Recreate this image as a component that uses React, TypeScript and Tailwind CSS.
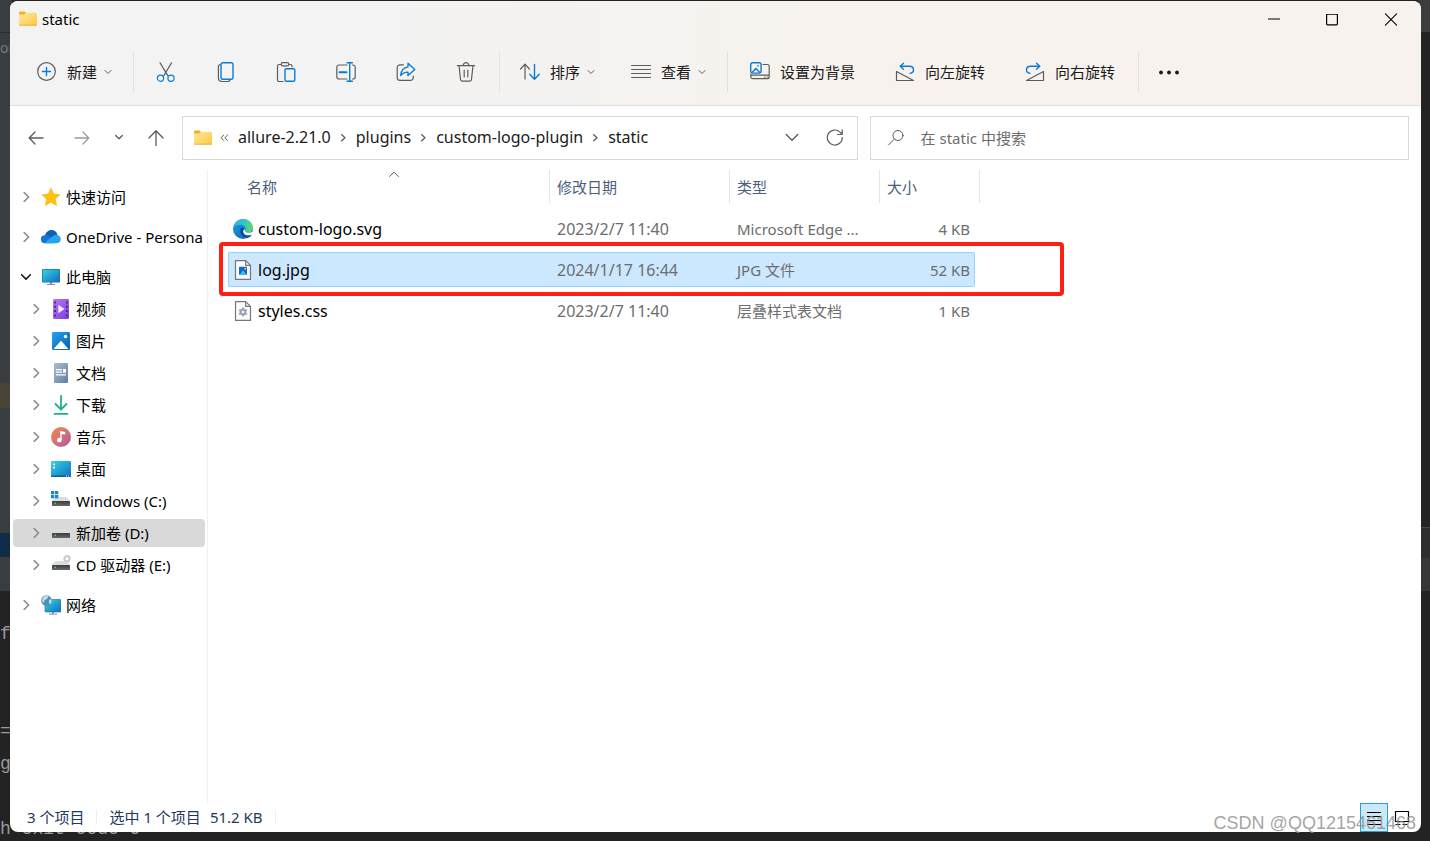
import React from 'react';

type IconProps = { children: React.ReactNode; className?: string; box?: string };

const Icon = ({ children, className = 'w-5 h-5', box = '0 0 20 20' }: IconProps) => (
  <svg viewBox={box} className={`shrink-0 ${className}`} fill="none" stroke="#5c5c5c" strokeWidth="1.2" strokeLinecap="round" strokeLinejoin="round" aria-hidden="true">
    {children}
  </svg>
);

const blue = '#0a7bd6';

const FolderIcon = () => (
  <Icon className="w-5 h-5">
    <path d="M1 3.4a1 1 0 0 1 1-1h4.6l1.6 1.6V8H1z" fill="#f5b21b" stroke="none" />
    <path d="M1 5.6h5.2l1.8-1.8H18a1 1 0 0 1 1 1V15.400a1 1 0 0 1-1 1H2a1 1 0 0 1-1-1z" fill="url(#folder)" stroke="none" />
    <path d="M1.4 16.2h17.2" stroke="#e8a723" strokeWidth=".8" />
  </Icon>
);

const ChevronSmall = () => (
  <Icon className="w-2 h-5" box="0 0 8 20">
    <path d="M1 8.5l3 3 3-3" strokeWidth="1" />
  </Icon>
);

const Divider = () => <div className="ml-[3px] mr-0.5 h-10 w-px shrink-0 bg-[#e2e1df]" />;

const iconButtons = [
  {
    label: '剪切',
    icon: (
      <>
        <path d="M4 .8l7.8 12.8M15.6 .8L7.8 13.6" />
        <circle cx="4.500" cy="16.2" r="3.1" stroke={blue} />
        <circle cx="15" cy="16.2" r="3.1" stroke={blue} />
      </>
    ),
  },
  {
    label: '复制',
    icon: (
      <>
        <path d="M4 2.600C2.8 3 2.4 3.800 2.4 4.800v10.600c0 2.4 1.6 4.1 4 4.1h5.2c1.2 0 2-.5 2.4-1.500" />
        <rect x="5" y=".7" width="12" height="16.6" rx="2" stroke={blue} strokeWidth="1.4" />
      </>
    ),
  },
  {
    label: '粘贴',
    icon: (
      <>
        <path d="M5 2.5H3A1.5 1.5 0 0 0 1.5 4v14A1.5 1.5 0 0 0 3 19.5h4M13 2.5h1.5A1.5 1.5 0 0 1 16 4v.8" />
        <rect x="5.2" y=".7" width="7.6" height="3.2" rx="1.5" />
        <rect x="9" y="6.8" width="9.8" height="12.5" rx="1.3" stroke={blue} strokeWidth="1.4" />
      </>
    ),
  },
  {
    label: '重命名',
    icon: (
      <>
        <path d="M11 3H3A2.2 2.2 0 0 0 .8 5.2v9.6A2.2 2.2 0 0 0 3 17h8M16.5 3h.5a2.2 2.2 0 0 1 2.2 2.2v9.6A2.2 2.2 0 0 1 17 17h-.5" />
        <path d="M3.5 10.200h7" stroke={blue} strokeWidth="2" />
        <path d="M13.7 .7v18.6M11 .7h5.4M11 19.3h5.4" stroke={blue} strokeWidth="1.4" />
      </>
    ),
  },
  {
    label: '共享',
    icon: (
      <>
        <path d="M7.5 2.8H4A2.8 2.8 0 0 0 1.2 5.6v10A2.8 2.8 0 0 0 4 18.4h10.5a2.8 2.8 0 0 0 2.8-2.8V14" />
        <path d="M12 1.3l6.8 6.2-6.8 6v-3.4c-3.2-.1-5.4 1-7.3 3.4.3-4.6 3-7.9 7.3-8.6z" stroke={blue} strokeWidth="1.4" />
      </>
    ),
  },
  {
    label: '删除',
    icon: (
      <path d="M1.4 3.6h17.2M7.2 3.4c0-3.6 5.6-3.6 5.6 0M3 3.8l1.5 13.4a2.2 2.2 0 0 0 2.2 2h6.6a2.2 2.2 0 0 0 2.2-2L17 3.8M8.2 8v7M11.8 8v7" />
    ),
  },
];

const RotateGlyph = () => (
  <>
    <path d="M1.500 9.500v9h17z" />
    <path d="M8.500 1.200L5.200 4.200l3.300 3M5.500 4.200h9c2.300 0 4 1.400 4 3.600s-1.600 3.400-3.500 3.600" stroke={blue} strokeWidth="1.4" />
  </>
);

const TextButton = ({ label, icon, menu }: { label: string; icon: React.ReactNode; menu?: boolean }) => (
  <button type="button" className={`flex h-10 items-center ${menu ? 'px-[18px]' : 'px-5'}`}>
    <Icon>{icon}</Icon>
    <span className="ml-2.5 mr-[7px] last:mr-0 whitespace-nowrap">{label}</span>
    {menu && <ChevronSmall />}
  </button>
);

const Toolbar = () => (
  <div className="flex h-[67px] items-center overflow-hidden pl-[9px] text-[#1b1b1b]">
    <TextButton
      menu
      label="新建"
      icon={
        <>
          <circle cx="9.5" cy="9.5" r="8.8" />
          <path d="M9.5 5.5v8M5.5 9.5h8" stroke={blue} strokeWidth="1.4" />
        </>
      }
    />
    <Divider />
    {iconButtons.map((b) => (
      <button key={b.label} type="button" aria-label={b.label} className="flex h-10 w-[60px] shrink-0 items-center justify-center">
        <Icon>{b.icon}</Icon>
      </button>
    ))}
    <Divider />
    <TextButton
      menu
      label="排序"
      icon={
        <>
          <path d="M5 17V2.5M.6 7L5 2.2 9.400 7" />
          <path d="M14.500 2.500v14.500M9.800 12.300l4.700 5 4.700-5" stroke={blue} strokeWidth="1.4" />
        </>
      }
    />
    <TextButton menu label="查看" icon={<path d="M.6 3.5h19M.6 7.5h19M.6 11.5h19M.6 15.5h19" />} />
    <Divider />
    <TextButton
      label="设置为背景"
      icon={
        <>
          <path d="M13 2.5h4.2a2 2 0 0 1 2 2v10.2a2 2 0 0 1-2 2H2.800a2 2 0 0 1-2-2V12M.8 13.2h18.4M14.500 15h.5M17 15h.2" />
          <rect x=".7" y=".7" width="10.4" height="10.4" rx="2" stroke={blue} strokeWidth="1.4" />
          <path d="M2.500 10l3.400-3.500L9.300 10M7.800 3.700h.4" stroke={blue} strokeWidth="1.4" />
        </>
      }
    />
    <TextButton label="向左旋转" icon={<RotateGlyph />} />
    <TextButton
      label="向右旋转"
      icon={
        <g transform="matrix(-1 0 0 1 20 0)">
          <RotateGlyph />
        </g>
      }
    />
    <Divider />
    <button type="button" aria-label="查看更多" className="flex h-10 items-center px-[18px]">
      <Icon>
        <g fill="#1b1b1b" stroke="none">
          <circle cx="2" cy="10.5" r="1.9" />
          <circle cx="10" cy="10.5" r="1.9" />
          <circle cx="18" cy="10.5" r="1.9" />
        </g>
      </Icon>
    </button>
  </div>
);

const TitleBar = () => (
  <div className="flex h-[37px] items-center pl-2">
    <div className="flex flex-1 items-center gap-1 pb-0.5 text-black">
      <FolderIcon />
      <h1>static</h1>
    </div>
    <button type="button" aria-label="最小化" className="flex h-full w-[58px] items-center justify-center">
      <Icon className="w-3 h-3" box="0 0 12 12">
        <path d="M0 5h12" stroke="#000" strokeWidth="1" strokeLinecap="butt" />
      </Icon>
    </button>
    <button type="button" aria-label="最大化" className="flex h-full w-[58px] items-center justify-center">
      <Icon className="w-3 h-3" box="0 0 12 12">
        <rect x=".6" y=".1" width="10.8" height="10.8" rx=".8" stroke="#000" />
      </Icon>
    </button>
    <button type="button" aria-label="关闭" className="flex h-full w-[60px] items-center justify-center">
      <Icon className="w-3 h-3 overflow-visible" box="0 0 12 12">
        <path d="M.4 -.1l11.200 11.200M11.600 -.1L.4 11.100" stroke="#000" strokeWidth="1.1" />
      </Icon>
    </button>
  </div>
);

const crumbs = ['allure-2.21.0', 'plugins', 'custom-logo-plugin', 'static'];

const AddressRow = () => (
  <div className="flex h-[65px] items-center border-t border-[#e0dfdd] bg-white pl-[3px] pr-3">
    <nav aria-label="导航" className="mr-[3px] flex shrink-0 items-center">
      <button type="button" aria-label="后退" className="flex h-10 w-[46px] items-center justify-center">
        <Icon className="w-4 h-4" box="0 0 16 16">
          <path d="M15 8H1.500M7 2L1.200 8 7 14" strokeWidth="1.3" />
        </Icon>
      </button>
      <button type="button" aria-label="前进" className="flex h-10 w-[46px] items-center justify-center">
        <Icon className="w-4 h-4" box="0 0 16 16">
          <path d="M1 8h13.500M9 2l5.800 6L9 14" stroke="#9c9c9c" strokeWidth="1.3" />
        </Icon>
      </button>
      <button type="button" aria-label="最近浏览的位置" className="flex h-10 w-7 items-center justify-center">
        <Icon className="w-2 h-5" box="0 0 8 20">
          <path d="M.7 7.500l3.300 3.300 3.300-3.300" strokeWidth="1.3" />
        </Icon>
      </button>
      <button type="button" aria-label="上移" className="flex h-10 w-[46px] items-center justify-center">
        <Icon className="w-4 h-4" box="0 0 16 16">
          <path d="M8 15.500V1M1 8l7-7.300L15 8" strokeWidth="1.3" />
        </Icon>
      </button>
    </nav>
    <div className="flex h-11 min-w-0 flex-[14] items-center border border-[#d9d9d9] pl-2.5 text-[#1b1b1b]">
      <FolderIcon />
      <Icon className="mx-[7px] w-2 h-5" box="0 0 8 20">
        <path d="M3.8 7L1 9.700l2.800 2.800M7.600 7L4.800 9.700l2.800 2.800" strokeWidth="1" />
      </Icon>
      <ol className="flex min-w-0 flex-1 items-center overflow-hidden whitespace-nowrap pb-0.5 text-base leading-5">
        {crumbs.map((c, i) => (
          <li key={c} className="flex items-center">
            <a href="#" className="px-[3px]">{c}</a>
            {i < crumbs.length - 1 && (
              <Icon className="mx-[7px] w-[5px] h-5" box="0 0 5 20">
                <path d="M.7 7.700l3.300 3-3.300 3" strokeWidth="1.3" />
              </Icon>
            )}
          </li>
        ))}
      </ol>
      <button type="button" aria-label="以前的位置" className="flex h-full w-[43px] shrink-0 items-center justify-center">
        <Icon className="w-3.5 h-3.5" box="0 0 14 14">
          <path d="M1.200 3.500L7 9.300l5.800-5.800" strokeWidth="1.4" />
        </Icon>
      </button>
      <button type="button" aria-label="刷新" className="flex h-full w-[43px] shrink-0 items-center justify-center">
        <Icon className="w-[18px] h-[18px]" box="0 0 18 18">
          <path d="M16.300 8.500A7.500 7.500 0 1 1 14.200 3.300L16 5M16.200 .8v4.700h-4.700" strokeWidth="1.2" />
        </Icon>
      </button>
    </div>
    <label className="ml-3 flex h-11 min-w-0 flex-[11] items-center border border-[#d9d9d9] pl-4">
      <Icon className="w-[18px] h-[18px]" box="0 0 18 18">
        <circle cx="11" cy="6.5" r="5" strokeWidth="1" />
        <path d="M7.300 10.200L1.500 16" strokeWidth="1" />
      </Icon>
      <input type="search" aria-label="搜索" placeholder="在 static 中搜索" className="ml-4 min-w-0 flex-1 outline-none placeholder:text-[#6d6d6d]" />
    </label>
  </div>
);

const Drive = () => (
  <g transform="translate(0 -2)" stroke="none">
    <path d="M4.500 8h11l3.500 4H1z" fill="#dcdddf" />
    <rect x="1" y="12" width="18" height="5" rx=".6" fill="url(#metal)" />
    <rect x="3.500" y="13.500" width="1.500" height="1.500" fill="#35e04b" />
  </g>
);

const treeIcons: Record<string, React.ReactNode> = {
  star: <path d="M10 1.200l2.700 5.900 6.300.7-4.700 4.300 1.300 6.400L10 15.300l-5.600 3.200 1.300-6.400L1 7.800l6.300-.7z" fill="#ffc20e" stroke="#f9b000" strokeWidth=".6" />,
  onedrive: (
    <g stroke="none">
      <path d="M3.800 9C4.600 5.400 7.300 3 10.400 3c2.900 0 5.200 1.600 6 4.600L10 13z" fill="#0f5fb4" />
      <path d="M4 16.200a4 4 0 0 1-.2-8c2.400-.6 4.400.6 6.200 2.300l3 5.700z" fill="#0f77d4" />
      <path d="M4 16.200c3-3.600 6-6 8.300-7.500 1.800-1.300 4.300-1.300 5.700 0 2.900 2.200 2.200 7.500-2 7.500z" fill="#28a4ea" />
    </g>
  ),
  pc: (
    <g stroke="none">
      <path d="M9 15h2v2H9zM6 17h8v1H6z" fill="#8b9298" />
      <rect x="1" y="2" width="18" height="13.5" rx=".8" fill="#186b8f" />
      <rect x="1.600" y="2.600" width="16.800" height="12.300" fill="url(#screen)" />
    </g>
  ),
  video: (
    <g stroke="none">
      <rect x="2" y="0" width="16" height="20" rx="1.2" fill="url(#violet)" />
      <path d="M3.300 2.500h1.700v2H3.300zm0 4.300h1.700v2H3.300zm0 4.300h1.700v2H3.300zm0 4.300h1.700v2H3.300zM15 2.500h1.700v2H15zm0 4.300h1.700v2H15zm0 4.300h1.700v2H15zm0 4.300h1.700v2H15z" fill="#4a2383" />
      <path d="M7.300 5.700l6.200 4.300-6.200 4.300z" fill="#f4eaff" />
    </g>
  ),
  picture: (
    <g stroke="none">
      <rect x="1" y="1" width="18" height="18" rx="1.2" fill="url(#photo)" />
      <path d="M2.500 18L10 9.800l7.500 8.200z" fill="#fff" />
      <circle cx="14.5" cy="5.5" r="1.7" fill="#fff" />
    </g>
  ),
  document: (
    <g stroke="none">
      <rect x="3" y="0" width="14" height="20" rx="1.2" fill="url(#slate)" />
      <path d="M5 6h6v1.200H5zm0 2.600h6v1.200H5zm0 2.600h10v1.200H5zM12 6h3v3.800h-3z" fill="#fff" />
    </g>
  ),
  download: <path d="M10 1v13M4.500 9l5.500 5.500L15.500 9M3.500 18.800h13" stroke="#20b08a" strokeWidth="1.8" />,
  music: (
    <g stroke="none">
      <circle cx="10" cy="10" r="10" fill="url(#music)" />
      <path d="M9.200 4l5 1v2.600l-3.500-.7v6.200a2.300 2.300 0 1 1-1.500-2.200z" fill="#fff" />
    </g>
  ),
  desktop: (
    <g stroke="none">
      <rect x="0" y="2" width="20" height="16" rx="1.2" fill="url(#screen)" />
      <path d="M2.200 4.500h1.800v1.800H2.200zm0 3.300h1.800v1.800H2.200z" fill="#fff" />
      <path d="M0 16.500h20v.5a1 1 0 0 1-1 1H1a1 1 0 0 1-1-1z" fill="#115d98" />
      <path d="M15 16.600h1v1h-1zm2 0h1v1h-1z" fill="#fff" />
    </g>
  ),
  windows: (
    <>
      <Drive />
      <path d="M0 0h3.300v3.300H0zm4 0h3.300v3.300H4zM0 4h3.300v3.300H0zm4 0h3.300v3.300H4z" fill="#1484d8" stroke="none" />
    </>
  ),
  drive: <Drive />,
  cd: (
    <>
      <Drive />
      <circle cx="16" cy="3.8" r="2.600" stroke="#c6ccd1" strokeWidth="2.2" fill="#fff" />
    </>
  ),
  network: (
    <g stroke="none">
      <path d="M11 16h2v2.500h-2zM8 18.500h8v1.200H8z" fill="#9aa1a7" />
      <rect x="4" y="4.500" width="16" height="12.500" rx=".8" fill="url(#screen)" stroke="#1b6d94" strokeWidth=".6" />
      <circle cx="5.500" cy="5.500" r="5.300" fill="#4c8fbb" />
      <path d="M2 2.500c2-2 4-2.200 5.500-1.500L6 4 3.500 5 3 8 1 6zM8 5l2.500-1v4L8 9z" fill="#c4e0ee" />
    </g>
  ),
};

const treeGroups = [
  [{ name: '快速访问', icon: 'star' }],
  [{ name: 'OneDrive - Persona', icon: 'onedrive' }],
  [
    { name: '此电脑', icon: 'pc', open: true },
    { name: '视频', icon: 'video', child: true },
    { name: '图片', icon: 'picture', child: true },
    { name: '文档', icon: 'document', child: true },
    { name: '下载', icon: 'download', child: true },
    { name: '音乐', icon: 'music', child: true },
    { name: '桌面', icon: 'desktop', child: true },
    { name: 'Windows (C:)', icon: 'windows', child: true },
    { name: '新加卷 (D:)', icon: 'drive', child: true, selected: true },
    { name: 'CD 驱动器 (E:)', icon: 'cd', child: true },
  ],
  [{ name: '网络', icon: 'network' }],
] as { name: string; icon: string; open?: boolean; child?: boolean; selected?: boolean }[][];

const Sidebar = () => (
  <aside className="flex w-[198px] shrink-0 flex-col gap-3 overflow-hidden border-r border-[#f0f0f0] pl-[3px] pr-0.5 pt-[13px] text-black">
    {treeGroups.map((group) => (
      <ul key={group[0].name} className="flex flex-col gap-1">
        {group.map((item) => (
          <li key={item.name} className={`rounded-sm ${item.selected ? 'bg-[#d9d9d9]' : ''}`}>
            <a href="#" className={`flex h-7 items-center overflow-hidden whitespace-nowrap ${item.child ? 'pl-[18px]' : 'pl-2'}`}>
              <Icon className="mr-2.5 w-2.5 h-2.5" box="0 0 10 10">
                {item.open ? (
                  <path d="M.6 2.700L5 7.100l4.400-4.400" stroke="#1b1b1b" strokeWidth="1.6" />
                ) : (
                  <path d="M3.200 .6L7.600 5 3.200 9.400" stroke="#8a8a8a" strokeWidth="1.5" />
                )}
              </Icon>
              <Icon className="mr-[5px] w-5 h-5">{treeIcons[item.icon]}</Icon>
              {item.name}
            </a>
          </li>
        ))}
      </ul>
    ))}
  </aside>
);

const Page = ({ children }: { children: React.ReactNode }) => (
  <>
    <path d="M2.500 .6h10.200l4.800 4.800v14H2.500z" fill="#fbfbfb" stroke="#777" />
    <path d="M12.700 .6v4.800h4.800" stroke="#777" />
    {children}
  </>
);

const files = [
  {
    name: 'custom-logo.svg',
    date: '2023/2/7 11:40',
    type: 'Microsoft Edge ...',
    size: '4 KB',
    icon: (
      <g stroke="none">
        <circle cx="10" cy="10" r="10" fill="url(#edgeBlue)" />
        <path d="M.3 8.500C1.200 3.500 5.200 0 10 0c6 0 10 4.300 10 8.800 0 3.200-2.400 5-5 5-2.300 0-3.300-.9-3.300-1.600 0-.6.900-.9.900-2.500 0-2.300-2.200-4-5-4C4.200 5.700 1.500 6.800.3 8.500z" fill="url(#edgeGreen)" />
        <path d="M7.700 9.300c-1.800 4.700 1.800 9.400 6.600 9.400 2 0 3.800-1.200 4.700-3.200-3.500 1.800-7.500.8-8.600-1.700-.7-1.700 0-3 .9-3.700-.8-1.400-2.600-1.700-3.600-.8z" fill="#0b4a9c" />
        <path d="M10.300 13c-.2-1.500.8-2.700 1.500-2.900-.3 1.400-.2 2.300 1 3.100 1.800 1.100 4.700.8 6.800-.6-.1 1-.4 2-.8 2.900-3.500 1.700-7.900.8-8.500-2.500z" fill="#fff" />
      </g>
    ),
  },
  {
    name: 'log.jpg',
    date: '2024/1/17 16:44',
    type: 'JPG 文件',
    size: '52 KB',
    selected: true,
    icon: (
      <Page>
        <rect x="6" y="6.800" width="8" height="8" rx=".6" fill="#1769c7" stroke="none" />
        <path d="M6.600 14.800L10 10.500l3.600 4.300z" fill="#36c5f0" stroke="none" />
        <circle cx="12.2" cy="8.7" r=".8" fill="#fff" stroke="none" />
      </Page>
    ),
  },
  {
    name: 'styles.css',
    date: '2023/2/7 11:40',
    type: '层叠样式表文档',
    size: '1 KB',
    icon: (
      <Page>
        <circle cx="10" cy="11" r="2.4" stroke="#9aa5b1" strokeWidth="2.2" />
        <path d="M10 7v1M10 14v1M6.600 9l.9.500M12.500 12.500l.9.500M6.600 13l.9-.5M12.500 9.500l.9-.5" stroke="#9aa5b1" strokeWidth="1.6" />
      </Page>
    ),
  },
];

const FileTable = () => (
  <main className="relative min-w-0 flex-1 overflow-hidden pl-5">
    <table className="w-[752px] table-fixed border-separate border-spacing-0 text-left">
      <colgroup>
        <col className="w-[322px]" />
        <col className="w-[180px]" />
        <col className="w-[150px]" />
        <col className="w-[95px]" />
        <col className="w-[5px]" />
      </colgroup>
      <thead className="text-[#4c607a]">
        <tr className="h-[38px]">
          <th className="relative p-0 align-top font-normal">
            <Icon className="absolute left-[161px] top-px w-2.5 h-2" box="0 0 10 8">
              <path d="M.6 5.500L5 1.100l4.400 4.400" strokeWidth="1" />
            </Icon>
            <div className="flex h-[33px] items-center border-r border-[#e5e5e5] pl-[19px]">名称</div>
          </th>
          <th className="p-0 align-top font-normal">
            <div className="flex h-[33px] items-center border-r border-[#e5e5e5] pl-[7px]">修改日期</div>
          </th>
          <th className="p-0 align-top font-normal">
            <div className="flex h-[33px] items-center border-r border-[#e5e5e5] pl-[7px]">类型</div>
          </th>
          <th colSpan={2} className="p-0 align-top font-normal">
            <div className="flex h-[33px] items-center border-r border-[#e5e5e5] pl-[7px]">大小</div>
          </th>
        </tr>
      </thead>
      <tbody className="text-[#6d6d6d]">
        {files.map((f) => {
          const cell = `my-[3px] flex h-[35px] items-center whitespace-nowrap border-y ${f.selected ? 'border-[#99d1ff] bg-[#cce8ff]' : 'border-transparent'}`;
          return (
            <tr key={f.name}>
              <td className="p-0">
                <div className={`${cell} rounded-l-xs border-l pl-1 text-base leading-5 text-black`}>
                  <Icon className="mr-[5px] w-5 h-5">{f.icon}</Icon>
                  {f.name}
                </div>
              </td>
              <td className="p-0">
                <div className={`${cell} pl-[7px] text-base leading-5`}>{f.date}</div>
              </td>
              <td className="p-0">
                <div className={`${cell} pl-[7px]`}>{f.type}</div>
              </td>
              <td className="p-0">
                <div className={`${cell} justify-end rounded-r-xs border-r pr-1`}>{f.size}</div>
              </td>
            </tr>
          );
        })}
      </tbody>
    </table>
    <div className="pointer-events-none absolute left-[11px] top-[72px] h-[54px] w-[845px] rounded-sm border-4 border-[#ff1f12]" />
  </main>
);

const StatusBar = () => (
  <footer className="flex h-[29px] shrink-0 items-center justify-between pl-[17px] pr-[5px] text-[#1e395b]">
    <div className="flex items-center pb-0.5">
      <span>3 个项目</span>
      <span className="mx-3 h-3.5 w-px bg-[#eeeeee]" />
      <span>选中 1 个项目</span>
      <span className="ml-[9px]">51.2 KB</span>
      <span className="mx-3 h-3.5 w-px bg-[#eeeeee]" />
    </div>
    <div className="flex h-full">
      <button type="button" aria-label="详细信息" className="flex h-full w-7 items-center justify-center border border-[#26a0da] bg-[#cbe8f6]">
        <Icon className="w-4 h-4" box="0 0 16 16">
          <path d="M1 2.500h14M1 6.500h14M1 10.500h14M1 14.500h14" stroke="#000" strokeLinecap="butt" strokeWidth="1" />
        </Icon>
      </button>
      <button type="button" aria-label="大缩略图" className="flex h-full w-7 items-center justify-center">
        <Icon className="w-4 h-4" box="0 0 16 16">
          <path d="M1.500 1.500h13v10h-13zM2 14.500h4M9 14.500h4" stroke="#000" />
        </Icon>
      </button>
    </div>
  </footer>
);

// Dark editor window showing around the edges of the explorer
const Backdrop = () => (
  <div aria-hidden="true" className="absolute inset-0 overflow-hidden bg-[#232323] font-['Liberation_Mono',monospace] text-lg leading-6 text-[#9a9a9a]">
    <div className="absolute left-0 top-0 h-[591px] w-3 bg-[#3a3d3f]">
      <div className="mt-8 h-px bg-[#2b2b2b]" />
      <div className="mt-[350px] h-[25px] bg-[#4a4438]" />
      <div className="mt-[125px] h-6 bg-[#0e2c47]" />
    </div>
    <div className="absolute right-0 top-0 h-8 w-3 bg-[#3a3d3f]" />
    <div className="absolute right-0 top-[527px] h-8 w-3 border-t border-[#484848] bg-[#2b2d2f]" />
    <div className="absolute right-0 top-[558px] h-[33px] w-3 bg-[#35383a]" />
    <span className="absolute left-0 top-9 font-['Noto_Sans',sans-serif] text-sm leading-6 text-[#77797a]">or</span>
    <span className="absolute left-0 top-[622px]">f</span>
    <span className="absolute left-0 top-[719px]">=</span>
    <span className="absolute left-0 top-[752px]">g</span>
    <span className="absolute left-0 top-[817px]">h exit code 0</span>
  </div>
);

const Gradients = () => (
  <svg className="absolute h-0 w-0" aria-hidden="true">
    <defs>
      <linearGradient id="folder" x1="0" y1="0" x2="1" y2="1">
        <stop offset="0" stopColor="#ffe8a0" />
        <stop offset="1" stopColor="#fcc944" />
      </linearGradient>
      <linearGradient id="metal" x1="0" y1="0" x2="0" y2="1">
        <stop offset="0" stopColor="#3c3c3c" />
        <stop offset="1" stopColor="#6a6a6a" />
      </linearGradient>
      <linearGradient id="screen" x1="0" y1="0" x2="1" y2="1">
        <stop offset="0" stopColor="#35d3e3" />
        <stop offset="1" stopColor="#0f6fc4" />
      </linearGradient>
      <linearGradient id="violet" x1="0" y1="0" x2="1" y2="1">
        <stop offset="0" stopColor="#b678f5" />
        <stop offset="1" stopColor="#7b3fd6" />
      </linearGradient>
      <linearGradient id="photo" x1="0" y1="0" x2="1" y2="1">
        <stop offset="0" stopColor="#22a5ee" />
        <stop offset="1" stopColor="#0a5cb0" />
      </linearGradient>
      <linearGradient id="slate" x1="0" y1="0" x2="1" y2="1">
        <stop offset="0" stopColor="#a9bfd3" />
        <stop offset="1" stopColor="#5f7f9f" />
      </linearGradient>
      <linearGradient id="music" x1="0" y1="0" x2="1" y2="1">
        <stop offset="0" stopColor="#f48b52" />
        <stop offset="1" stopColor="#b0589f" />
      </linearGradient>
      <linearGradient id="edgeBlue" x1="0" y1="0" x2="1" y2="1">
        <stop offset="0" stopColor="#1e9fe0" />
        <stop offset="1" stopColor="#0f5cb8" />
      </linearGradient>
      <linearGradient id="edgeGreen" x1="0" y1="0" x2="1" y2="0">
        <stop offset="0" stopColor="#2bb4ea" />
        <stop offset=".5" stopColor="#2fc3d8" />
        <stop offset="1" stopColor="#6ad85a" />
      </linearGradient>
    </defs>
  </svg>
);

const App = () => {
  return (
    <div className="relative flex min-h-screen flex-col pb-[9px] pl-2.5 pr-[9px] pt-px font-['Noto_Sans','Noto_Sans_CJK_SC',sans-serif] text-[15px] leading-5">
      <Gradients />
      <Backdrop />
      <div className="relative flex flex-1 flex-col overflow-hidden rounded-lg bg-white">
        <header className="bg-linear-to-r from-[#f3f3f3] from-25% to-[#f7f2ed] to-60%">
          <TitleBar />
          <Toolbar />
          <AddressRow />
        </header>
        <div className="flex flex-1">
          <Sidebar />
          <FileTable />
        </div>
        <StatusBar />
      </div>
      <span className="pointer-events-none absolute bottom-1.5 right-3.5 font-['Liberation_Sans',sans-serif] text-lg leading-6 text-[#8c8c8c]/80">CSDN @QQ1215461468</span>
    </div>
  );
};

export default App;
